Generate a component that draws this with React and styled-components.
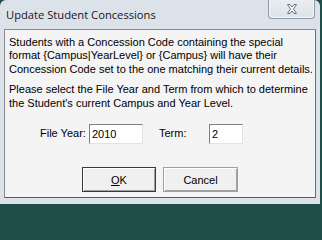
import React from "react";
import styled, { createGlobalStyle } from "styled-components";

const GlobalStyle = createGlobalStyle`
  html, body {
    margin: 0;
    padding: 0;
    background: #1f4d48;
  }
`;

const Window = styled.div`
  width: 320px;
  height: 204px;
  background: #dbe2ea;
  border-radius: 6px 6px 0 0;
  display: flex;
  flex-direction: column;
  box-sizing: border-box;
  font-family: "Liberation Sans", Arial, sans-serif;
`;

const TitleBar = styled.div`
  height: 29px;
  display: flex;
  justify-content: space-between;
  align-items: flex-start;
  flex-shrink: 0;
`;

const Title = styled.span`
  font-family: "Open Sans", "Noto Sans", sans-serif;
  font-size: 11.2px;
  color: #1c1424;
  padding: 7px 0 0 6px;
`;

const CloseButton = styled.div`
  width: 45px;
  height: 18px;
  margin-right: 5px;
  border: 1px solid #8e9aa6;
  border-top: none;
  border-radius: 0 0 4px 4px;
  background: linear-gradient(#e9edf1, #dde3e9);
  box-shadow: inset 1px 0 #f4f6f8, inset -1px -1px #f4f6f8;
  display: flex;
  align-items: center;
  justify-content: center;
`;

const Client = styled.div`
  margin: 0 4px;
  height: 169px;
  box-sizing: border-box;
  border: 1px solid #8a8a8a;
  border-bottom-color: #5c5c5c;
  border-right-color: #6c6c6c;
  background: #f4f4f4;
  padding: 6px 0 0 4px;
  font-size: 11px;
  line-height: 13.4px;
  color: #000;
`;

const Paragraph = styled.p`
  margin: 0 0 7px 0;
  white-space: nowrap;
`;

const FieldRow = styled.div`
  display: flex;
  align-items: center;
  margin-top: 14px;
  padding-left: 31px;
`;

const Label = styled.label`
  width: ${(p) => p.$width}px;
  margin-left: ${(p) => p.$gap || 0}px;
  flex-shrink: 0;
`;

const TextBox = styled.input`
  width: ${(p) => p.$width}px;
  height: 20px;
  box-sizing: border-box;
  border: 1px solid #e2e2e2;
  border-top-color: #7f7f7f;
  border-left-color: #7f7f7f;
  background: #fff;
  font-family: inherit;
  font-size: 11px;
  padding: 0 2px;
  margin: 0;
  outline: none;
`;

const ButtonRow = styled.div`
  display: flex;
  justify-content: center;
  gap: 7px;
  margin-top: 23px;
  padding-right: 4px;
`;

const Button = styled.button`
  width: ${(p) => p.$width}px;
  height: 25px;
  box-sizing: border-box;
  font-family: inherit;
  font-size: 11px;
  color: #000;
  background: #f0f0f0;
  border: 1px solid ${(p) => (p.$default ? "#3a3a3a" : "#a0a0a0")};
  border-radius: 0;
  box-shadow: inset 1px 1px #ffffff, inset -1px -1px #a0a0a0;
  padding: 0;
  margin: 0;

  u {
    text-decoration: underline;
  }
`;

function CloseGlyph() {
  return (
    <svg width="12" height="10" viewBox="0 0 12 10">
      <path
        d="M1.5 0.5 H4 L6 3 L8 0.5 H10.5 L7.5 5 L10.5 9.5 H8 L6 7 L4 9.5 H1.5 L4.5 5 Z"
        fill="#f7f8fa"
        stroke="#6a737c"
        strokeWidth="1"
        strokeLinejoin="round"
      />
    </svg>
  );
}

export default function App() {
  return (
    <>
      <GlobalStyle />
      <Window>
        <TitleBar>
          <Title>Update Student Concessions</Title>
          <CloseButton>
            <CloseGlyph />
          </CloseButton>
        </TitleBar>
        <Client>
          <Paragraph>
            Students with a Concession Code containing the special
            <br />
            format {"{Campus|YearLevel}"} or {"{Campus}"} will have their
            <br />
            Concession Code set to the one matching their current details.
          </Paragraph>
          <Paragraph>
            Please select the File Year and Term from which to determine
            <br />
            the Student's current Campus and Year Level.
          </Paragraph>
          <FieldRow>
            <Label $width={49}>File Year:</Label>
            <TextBox $width={54} defaultValue="2010" />
            <Label $width={50} $gap={16}>
              Term:
            </Label>
            <TextBox $width={34} defaultValue="2" />
          </FieldRow>
          <ButtonRow>
            <Button $width={74} $default>
              <u>O</u>K
            </Button>
            <Button $width={75}>Cancel</Button>
          </ButtonRow>
        </Client>
      </Window>
    </>
  );
}
